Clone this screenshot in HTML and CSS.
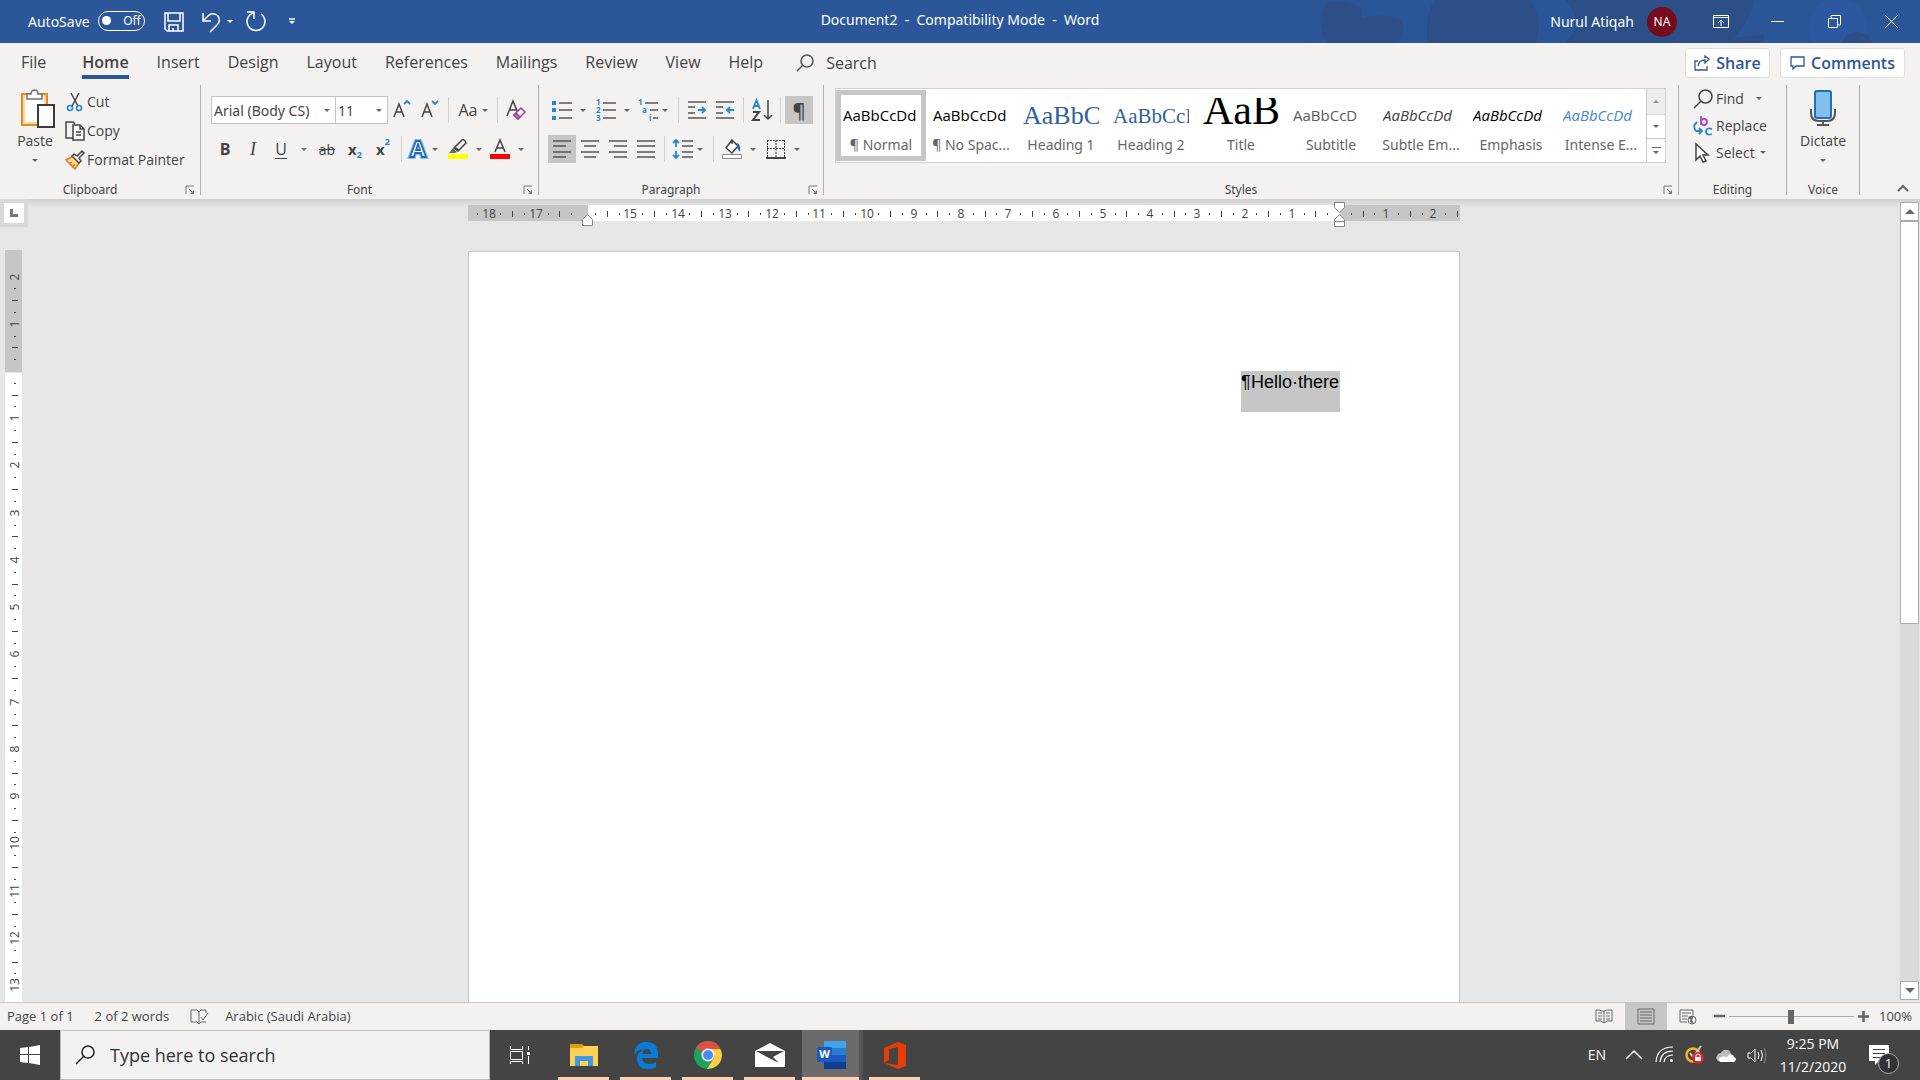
FILE: index.html
```html
<!DOCTYPE html>
<html lang="en">
<head>
<meta charset="utf-8">
<title>Document2 - Compatibility Mode - Word</title>
<link rel="stylesheet" href="styles.css">
</head>
<body>
<header class="titlebar">
  <svg class="titlebar-art" width="640" height="43" viewBox="0 0 640 43" aria-hidden="true">
    <path class="art-mid" d="M30 0H640V43H30Z"/>
    <path class="art-dark" d="M48 43Q34 24 46 4Q62 -2 82 8V18Q100 12 122 20Q126 32 118 43Z"/>
    <path class="art-dark" d="M154 0H250Q264 22 256 43H148Q144 20 154 0Z"/>
    <path class="art-dark" d="M285 0H474Q470 24 448 43H284Q308 24 285 0Z"/>
    <circle class="art-light" cx="558" cy="28" r="30"/>
    <path class="art-dark" d="M432 43Q460 36 484 35Q484 40 478 43ZM562 43Q566 32 577 32Q588 32 592 43Z"/>
  </svg>
  <div class="quick">
    <span class="autosave">AutoSave</span>
    <button class="toggle" role="switch" aria-checked="false"><i></i>Off</button>
    <button class="qbtn save" aria-label="Save"><svg width="20" height="20" viewBox="0 0 20 20"><path d="M1 1H19V19H3L1 17ZM4 1V9H16V1M5 19V13H14V19M9 16V19"/></svg></button>
    <button class="qbtn undo" aria-label="Undo"><svg width="20" height="20" viewBox="0 0 20 20"><path d="M2 1V9H10M2 9L8 3Q13 0 17 4Q20 9 16 13L9 20"/></svg></button>
    <button class="caret white" aria-label="Undo history"></button>
    <button class="qbtn redo" aria-label="Repeat"><svg width="20" height="21" viewBox="0 0 20 21"><path d="M1 1H8V8M15 3A9 9 0 1 1 5 3L8 1"/></svg></button>
    <button class="qbtn more" aria-label="Customize"><svg width="6" height="7" viewBox="0 0 6 7"><path d="M0 1H6"/><path class="solid" d="M0 3H6L3 6Z"/></svg></button>
  </div>
  <h1>Document2&nbsp; -&nbsp; Compatibility Mode&nbsp; -&nbsp; Word</h1>
  <div class="account">
    <span>Nurul Atiqah</span><span class="avatar">NA</span>
    <button class="win" aria-label="Ribbon display options"><svg width="16" height="13" viewBox="0 0 16 13"><path d="M.5 .5H15.500V12.500H.5ZM.5 2.500H15.500M8 11V5M5 8L8 5L11 8"/></svg></button>
    <button class="win" aria-label="Minimize"><svg width="13" height="13" viewBox="0 0 13 13"><path d="M0 6.500H13"/></svg></button>
    <button class="win" aria-label="Restore"><svg width="13" height="13" viewBox="0 0 13 13"><path d="M.5 3.500H9.500V12.500H.5ZM3 3V.5H12.500V10H10"/></svg></button>
    <button class="win" aria-label="Close"><svg width="13" height="13" viewBox="0 0 13 13"><path d="M0 0L13 13M13 0L0 13"/></svg></button>
  </div>
</header>

<nav class="tabs">
  <a class="file" href="#file">File</a>
  <a class="active" href="#home">Home</a>
  <a href="#insert">Insert</a>
  <a href="#design">Design</a>
  <a href="#layout">Layout</a>
  <a href="#references">References</a>
  <a href="#mailings">Mailings</a>
  <a href="#review">Review</a>
  <a href="#view">View</a>
  <a href="#help">Help</a>
  <label class="tell"><svg width="18" height="18" viewBox="0 0 18 18"><circle cx="11" cy="7" r="6"/><path d="M7 11L1 17"/></svg><input type="text" placeholder="Search" aria-label="Search"></label>
  <button class="pill share"><svg width="16" height="16" viewBox="0 0 16 16"><path d="M4 6H1V15H13V11M4 11Q5 5 11 5V8L15 4L11 1V3"/></svg>Share</button>
  <button class="pill"><svg width="15" height="14" viewBox="0 0 15 14"><path d="M1 1H14V10H6L3 13V10H1Z"/></svg>Comments</button>
</nav>

<section class="ribbon">
  <div class="group clipboard">
    <div class="body">
      <button class="big"><svg width="42" height="40" viewBox="-6 0 42 40"><path d="M2 5H27V36H2Z" fill="#fddc8b" stroke="#e8882e" stroke-width="2"/><path d="M5 8H24V33H5Z" fill="#fff"/><path d="M7 10V5H11Q11 1 15 1Q18 1 18 5H22V10Z" fill="#fafafa" stroke="#737373" stroke-width="1.500"/><path d="M18 16H34V38H18Z" fill="#fafafa" stroke="#3b3b3b" stroke-width="2"/></svg><span>Paste</span><i class="tri"></i></button>
      <div class="stack">
        <button><svg width="20" height="20" viewBox="0 0 20 20"><path d="M6 1L13 14M14 1L7 14" stroke="#444" stroke-width="1.500"/><circle cx="5" cy="16" r="2.500" stroke="#2488d0" stroke-width="1.600"/><circle cx="14" cy="16" r="2.500" stroke="#2488d0" stroke-width="1.600"/></svg>Cut</button>
        <button><svg width="20" height="20" viewBox="0 0 20 20" stroke="#444" stroke-width="1.500"><path d="M8 17H1V1H8L10 3"/><path d="M8 4H15L19 8V19H8Z" fill="#fff"/><path d="M15 4V8H19M11 11H16M11 14H16"/></svg>Copy</button>
        <button><svg width="20" height="20" viewBox="0 0 20 20"><path d="M1 10L8 6L14 13L10 19Z" fill="#fddc8b" stroke="#e8761f" stroke-width="1.500"/><path d="M4 14L7 12M7 17L10 14" stroke="#e8761f" stroke-width="1.500"/><path d="M7 6L9 4L12 6L17 1L19 3L14 8L16 11L14 13Z" fill="#fff" stroke="#444" stroke-width="1.500"/></svg>Format Painter</button>
      </div>
    </div>
    <div class="foot">Clipboard<button class="launch" aria-label="Clipboard options"><svg width="10" height="10" viewBox="0 0 10 10"><path d="M1 9V1H9M4 4L8 8"/><path class="fill" d="M9 5V9H5Z"/></svg></button></div>
  </div>

  <div class="group font">
    <div class="body rows">
      <div class="row">
        <label class="combo face"><select aria-label="Font"><option>Arial (Body CS)</option></select><i class="tri"></i></label>
        <label class="combo size"><select aria-label="Font size"><option>11</option></select><i class="tri"></i></label>
        <button class="ic" aria-label="Grow font"><svg width="16" height="20" viewBox="2 0 16 20"><path d="M2 17L7 4L12 17M4 12H10"/><path class="blue" d="M12 4L15 1L18 4"/></svg></button>
        <button class="ic" aria-label="Shrink font"><svg width="16" height="20" viewBox="2 0 16 20"><path d="M2 17L7 4L12 17M4 12H10"/><path class="blue" d="M12 1L15 4L18 1"/></svg></button>
        <i class="sep"></i>
        <button class="case">Aa<i class="tri"></i></button>
        <i class="sep"></i>
        <button class="ic" aria-label="Clear formatting"><svg width="20" height="20" viewBox="0 0 20 20"><path d="M1 16L7 1L12 13M3 10H10"/><path d="M8 15L15 8L19 12L12 19Z" stroke="#9b3ea6" fill="#fff"/><path d="M8 15L10 13L14 17L12 19Z" fill="#c383cb" stroke="#9b3ea6"/></svg></button>
      </div>
      <div class="row">
        <button class="ic b">B</button><button class="ic i">I</button><button class="ic u">U</button><button class="caret" aria-label="Underline style"></button>
        <button class="ic s">ab</button><button class="ic x">x<sub>2</sub></button><button class="ic x">x<sup>2</sup></button>
        <i class="sep"></i>
        <button class="nc" aria-label="Text effects"><svg width="20" height="20" viewBox="0 0 20 20"><path d="M2 18L8 2H12L18 18H14L13 14H7L6 18Z" stroke="#83beec" stroke-width="4"/><path d="M2 18L8 2H12L18 18H14L13 14H7L6 18ZM8 11H12L10 5Z" fill="#fff" stroke="#1e6fbb" stroke-width="1.800"/></svg></button><button class="caret tight" aria-label="Text effects menu"></button>
        <button class="nc pen" aria-label="Highlight"><svg width="20" height="20" viewBox="0 0 20 20"><path d="M6 9L14 1Q17 0 18 4L10 12ZM7 8L11 12"/><path d="M5 9L9 13L7 14H1Z" fill="#666" stroke="none"/><path d="M0 15H20V20H0Z" fill="#ff0" stroke="none"/></svg></button><button class="caret" aria-label="Highlight colors"></button>
        <button class="nc" aria-label="Font color"><svg width="20" height="20" viewBox="0 0 20 20"><path d="M5 13L10 1L15 13M7 9H13"/><path d="M0 15H20V20H0Z" fill="red" stroke="none"/></svg></button><button class="caret" aria-label="Font colors"></button>
      </div>
    </div>
    <div class="foot">Font<button class="launch" aria-label="Font options"><svg width="10" height="10" viewBox="0 0 10 10"><path d="M1 9V1H9M4 4L8 8"/><path class="fill" d="M9 5V9H5Z"/></svg></button></div>
  </div>

  <div class="group para">
    <div class="body rows">
      <div class="row">
        <button class="nc sp" aria-label="Bullets"><svg width="20" height="20" viewBox="0 0 20 20"><path class="ln" d="M7 3H20M7 10H20M7 18H20"/><path class="bf" d="M0 1H4V5H0ZM0 8H4V12H0ZM0 16H4V20H0Z"/></svg></button><button class="caret" aria-label="Bullet library"></button>
        <button class="nc sp" aria-label="Numbering"><svg width="20" height="22" viewBox="0 0 20 22"><path class="ln" d="M7 4H20M7 11H20M7 19H20"/><text x="0" y="6">1</text><text x="0" y="14">2</text><text x="0" y="22">3</text></svg></button><button class="caret" aria-label="Numbering library"></button>
        <button class="nc" aria-label="Multilevel list"><svg width="20" height="22" viewBox="0 0 20 22"><path class="ln" d="M7 4H20M12 11H20M15 19H20"/><text x="0" y="6">1</text><text x="4" y="14">a</text><text x="11" y="22">i</text></svg></button><button class="caret tight" aria-label="List library"></button>
        <i class="sep wide"></i>
        <button class="ic" aria-label="Decrease indent"><svg width="20" height="20" viewBox="0 0 20 20"><path class="ln" d="M1 2H19M1 7H8M1 13H8M1 18H19"/><path class="blue" d="M11 10H18M15 7L18 10L15 13"/></svg></button>
        <button class="ic" aria-label="Increase indent"><svg width="20" height="20" viewBox="0 0 20 20"><path class="ln" d="M1 2H19M1 7H8M1 13H8M1 18H19"/><path class="blue" d="M19 10H12M15 7L12 10L15 13"/></svg></button>
        <i class="sep"></i>
        <button class="ic" aria-label="Sort"><svg width="20" height="22" viewBox="0 0 20 22"><path d="M1 10L4.500 1L8 10M2 7H7" class="blue"/><path d="M1 13H7L1 21H8" stroke-width="2"/><path d="M16 1V20M12 16L16 20L20 16"/></svg></button>
        <i class="sep"></i>
        <button class="ic on pil">¶</button>
      </div>
      <div class="row">
        <button class="ic on" aria-label="Align left"><svg width="20" height="20" viewBox="0 0 20 20"><path class="ln" d="M1 2H19M1 7H14M1 13H19M1 18H14"/></svg></button>
        <button class="ic" aria-label="Center"><svg width="20" height="20" viewBox="0 0 20 20"><path class="ln" d="M1 2H19M4 7H16M1 13H19M4 18H16"/></svg></button>
        <button class="ic" aria-label="Align right"><svg width="20" height="20" viewBox="0 0 20 20"><path class="ln" d="M1 2H19M6 7H19M1 13H19M6 18H19"/></svg></button>
        <button class="ic" aria-label="Justify"><svg width="20" height="20" viewBox="0 0 20 20"><path class="ln" d="M1 2H19M1 7H19M1 13H19M1 18H19"/></svg></button>
        <i class="sep"></i>
        <button class="nc sp" aria-label="Line spacing"><svg width="20" height="20" viewBox="0 0 20 20"><path class="ln" d="M9 2H20M9 7H20M9 13H20M9 18H20"/><path class="blue" d="M3 1V8M0 4L3 1L6 4M3 12V19M0 16L3 19L6 16"/></svg></button><button class="caret tight" aria-label="Line spacing menu"></button>
        <i class="sep wide"></i>
        <button class="nc sp" aria-label="Shading"><svg width="20" height="20" viewBox="0 0 20 20"><path d="M10 1L16 7L10 14L4 9ZM10 1V5" fill="#fff"/><path d="M15 4Q19 5 18 13L15 9Z" fill="#1e6fbb" stroke="none"/><path d="M.5 15.500H19.500V19.500H.5Z" fill="#fff" stroke="#888" stroke-width="1"/></svg></button><button class="caret" aria-label="Shading colors"></button>
        <button class="nc sp" aria-label="Borders"><svg width="20" height="20" viewBox="0 0 20 20"><path d="M1 1.500H19M1.500 1V18M18.500 1V18M10 1V18M1 9.500H19" stroke-dasharray="2 1" stroke-width="1"/><path d="M0 19H20" stroke-width="2"/></svg></button><button class="caret" aria-label="Borders menu"></button>
      </div>
    </div>
    <div class="foot">Paragraph<button class="launch" aria-label="Paragraph options"><svg width="10" height="10" viewBox="0 0 10 10"><path d="M1 9V1H9M4 4L8 8"/><path class="fill" d="M9 5V9H5Z"/></svg></button></div>
  </div>

  <div class="group styles">
    <div class="body">
      <div class="gallery">
        <button class="tile sel"><span class="pv">AaBbCcDd</span><span class="nm">¶ Normal</span></button>
        <button class="tile"><span class="pv">AaBbCcDd</span><span class="nm">¶ No Spac...</span></button>
        <button class="tile"><span class="pv h1">AaBbC</span><span class="nm">Heading 1</span></button>
        <button class="tile"><span class="pv h2">AaBbCcI</span><span class="nm">Heading 2</span></button>
        <button class="tile"><span class="pv ti">AaB</span><span class="nm">Title</span></button>
        <button class="tile"><span class="pv st">AaBbCcD</span><span class="nm">Subtitle</span></button>
        <button class="tile"><span class="pv em dim">AaBbCcDd</span><span class="nm">Subtle Em...</span></button>
        <button class="tile"><span class="pv em">AaBbCcDd</span><span class="nm">Emphasis</span></button>
        <button class="tile"><span class="pv em blu">AaBbCcDd</span><span class="nm">Intense E...</span></button>
        <div class="gscroll">
          <button class="off" aria-label="Previous styles"><i class="tri up"></i></button>
          <button aria-label="Next styles"><i class="tri"></i></button>
          <button class="all" aria-label="More styles"><i class="tri"></i></button>
        </div>
      </div>
    </div>
    <div class="foot">Styles<button class="launch" aria-label="Styles pane"><svg width="10" height="10" viewBox="0 0 10 10"><path d="M1 9V1H9M4 4L8 8"/><path class="fill" d="M9 5V9H5Z"/></svg></button></div>
  </div>

  <div class="group editing">
    <div class="body stack">
      <button><svg width="20" height="20" viewBox="0 0 20 20" stroke="#444" stroke-width="1.500"><circle cx="12.500" cy="7.500" r="6.500"/><path d="M8 12L1 19"/></svg>Find<i class="tri far"></i></button>
      <button><svg width="20" height="20" viewBox="0 0 20 20"><path d="M8 0V9M8 6Q8 3 11 3Q14 3 14 6Q14 9 11 9Q8 9 8 6" stroke="#b146c2" stroke-width="1.800"/><path d="M4 6Q-1 10 3 15H9M6 12L9 15L6 18M19 13Q14 11 13 15Q13 20 19 18" stroke="#2488d0" stroke-width="1.800"/></svg>Replace</button>
      <button><svg width="20" height="20" viewBox="0 0 20 20"><path d="M3 1V17L7 13L10 19L13 18L10 12H15Z" fill="#fff" stroke="#444" stroke-width="1.500"/></svg>Select<i class="tri"></i></button>
    </div>
    <div class="foot">Editing</div>
  </div>

  <div class="group voice">
    <div class="body">
      <button class="big"><svg width="26" height="40" viewBox="0 0 26 40"><path d="M1 20V24Q1 32 9 32H17Q25 32 25 24V20M13 32V36M7 36H19" stroke="#555" stroke-width="2"/><rect x="5" y="2" width="16" height="27" rx="2" fill="#83beec" stroke="#1e6fbb" stroke-width="2"/></svg><span>Dictate</span><i class="tri"></i></button>
    </div>
    <div class="foot">Voice</div>
  </div>
  <button class="collapse" aria-label="Collapse ribbon"><svg width="12" height="8" viewBox="0 0 12 8"><path d="M1 7L6 2L11 7"/></svg></button>
</section>

<main class="workspace">
  <aside class="vside">
    <button class="tabsel" aria-label="Tab type"><svg width="8" height="8" viewBox="0 0 8 8"><path d="M0 0H3V5H8V8H0Z" fill="#777"/></svg></button>
    <svg class="vruler" width="18" height="754" id="vruler" aria-label="Vertical ruler"></svg>
  </aside>
  <div class="canvas">
    <svg class="hruler" width="992" height="26" id="hruler" aria-label="Horizontal ruler"></svg>
    <article class="page"><p>¶<span>Hello·there</span></p></article>
  </div>
  <div class="vscroll">
    <button aria-label="Scroll up"><i class="tri up"></i></button>
    <div class="track"><div class="thumb"></div></div>
    <button aria-label="Scroll down"><i class="tri"></i></button>
  </div>
</main>

<footer class="status">
  <span>Page 1 of 1</span>
  <span>2 of 2 words</span>
  <button class="proof" aria-label="Proofing"><svg width="18" height="16" viewBox="0 0 18 16"><path d="M9 3L7 1H1V13H7L9 15L11 13H16M9 3V15M9 3L11 1H16V4M11 8L13 11L18 4"/></svg></button>
  <span>Arabic (Saudi Arabia)</span>
  <div class="views">
    <button aria-label="Read mode"><svg width="18" height="15" viewBox="0 0 18 15"><path d="M9 2H6L5 1H1V12H6L9 14L12 12H17V1H12L9 2ZM9 2V14M3 4H7M3 7H7M3 10H7M11 4H15M11 7H15M11 10H15"/></svg></button>
    <button class="on" aria-label="Print layout"><svg width="18" height="17" viewBox="0 0 18 17"><path d="M1 1H17V16H1ZM3 4H15M3 7H15M3 10H15M3 13H15"/></svg></button>
    <button aria-label="Web layout"><svg width="18" height="16" viewBox="0 0 18 16"><path d="M8 13H1V1H14V6M3 4H12M3 7H9M3 10H8"/><circle cx="13" cy="11" r="4" fill="#fff"/><path d="M10 9L13 8L12 12L14 14" stroke-width="2"/></svg></button>
  </div>
  <button class="zm" aria-label="Zoom out"><svg width="11" height="11" viewBox="0 0 11 11"><path d="M0 5H11"/></svg></button>
  <input class="zoom" type="range" min="10" max="190" value="100" aria-label="Zoom">
  <button class="zm" aria-label="Zoom in"><svg width="11" height="11" viewBox="0 0 11 11"><path d="M0 5.500H11M5.500 0V11"/></svg></button>
  <span class="pct">100%</span>
</footer>

<div class="taskbar">
  <button class="start" aria-label="Start"><svg width="20" height="20" viewBox="0 0 20 20"><path fill="#fff" d="M0 3L8 2V9H0ZM9 2L20 0V9H9ZM0 10H8V18L0 17ZM9 10H20V20L9 18Z"/></svg></button>
  <label class="search"><svg width="20" height="20" viewBox="0 0 20 20"><circle cx="13" cy="7" r="6"/><path d="M9 11L1 19"/></svg><input type="text" placeholder="Type here to search" aria-label="Type here to search"></label>
  <button class="app plain" aria-label="Task view"><svg width="20" height="20" viewBox="0 0 20 20" fill="none" stroke="#fff"><path d="M.5 1V4.500H12.500V1M.5 6.500H12.500V14.500H.5ZM.5 19V16.500H12.500V19M18.500 1V5M18.500 11V19"/><path d="M17 7H20V10H17Z" fill="#fff" stroke="none"/></svg></button>
  <button class="app" aria-label="File Explorer"><svg width="28" height="24" viewBox="0 0 28 24"><path d="M0 1H12L14 3H27V22H0Z" fill="#e19d0a"/><path d="M0 5H12L14 3H28V23H0Z" fill="#fdd056"/><path d="M5 13H23V23H18V18H10V23H5Z" fill="#3d9ae0"/></svg></button>
  <button class="app" aria-label="Edge"><svg width="26" height="27" viewBox="0 0 26 27"><path d="M1 13Q2 0 13 0Q25 0 25 12V16H9Q10 22 16 22Q20 22 23 20V25Q20 27 15 27Q4 27 4 17Q4 10 11 7Q5 7 1 13ZM9 12H18Q18 7 14 7Q10 7 9 12Z" fill="#0a7cd8" fill-rule="evenodd"/></svg></button>
  <button class="app" aria-label="Chrome"><svg width="28" height="28" viewBox="0 0 28 28"><circle cx="14" cy="14" r="14" fill="#1da261"/><path d="M14 14L2 7Q6 0 14 0Q23 0 26 8H14Z" fill="#dd5144"/><path d="M14 8H26Q28 11 28 14Q27 27 13 28L20 17Z" fill="#ffce44"/><circle cx="14" cy="14" r="6.500" fill="#fff"/><circle cx="14" cy="14" r="5" fill="#4a8af4"/></svg></button>
  <button class="app" aria-label="Mail"><svg width="30" height="24" viewBox="0 0 30 24"><path d="M0 8L15 0L30 8V24H0Z" fill="#fff"/><path d="M1 8H29L18 14L24 20L12 14Z" fill="#444"/></svg></button>
  <button class="app active" aria-label="Word"><svg width="29" height="28" viewBox="0 0 29 28"><path d="M7 0H29V7H7Z" fill="#41a5ee"/><path d="M7 7H29V14H7Z" fill="#2b7cd3"/><path d="M7 14H29V21H7Z" fill="#185abd"/><path d="M7 21H29V28H7Z" fill="#103f91"/><rect y="6" width="15" height="15" rx="1" fill="#185abd"/><text x="7.500" y="17" text-anchor="middle">W</text></svg></button>
  <button class="app" aria-label="Office"><svg width="22" height="27" viewBox="0 0 22 27"><path d="M0 6L14 0L22 3V24L14 27L0 21L14 23V5L5 7V18L0 21Z" fill="#eb3c00"/></svg></button>
  <div class="tray">
    <span class="lang">EN</span>
    <svg width="18" height="12" viewBox="0 0 18 12"><path d="M1 10L9 2L17 10" stroke-width="1.500"/></svg>
    <svg width="20" height="16" viewBox="-4 0 20 16"><path d="M-2 15Q-1 0 15 0M2 15Q3 4 15 4M6 15Q7 8 15 8" stroke-width="1.200"/><circle cx="13.500" cy="13.500" r="1.500" fill="#fff" stroke="none"/></svg>
    <svg width="20" height="20" viewBox="0 0 20 20"><circle cx="8" cy="10" r="6.500" stroke="#fab41e" stroke-width="2.500"/><path d="M5 8L8 12L16 1" stroke="#ccc" stroke-width="2"/><circle cx="13" cy="13" r="6" fill="#d9252a" stroke="none"/><path d="M10 12H16V16H10Z" fill="#fff" stroke="none"/><path d="M11 12V10Q13 8 15 10V12"/></svg>
    <svg width="20" height="13" viewBox="0 0 20 13" stroke="none"><path stroke="none" d="M2 12Q-1 9 1 7Q2 4 5 4Q7 0 11 1Q14 1 15 5L10 13Z" fill="#bbb"/><path stroke="none" d="M4 13Q1 10 5 8Q8 7 11 8Q13 4 17 6Q18 7 18 8Q22 10 18 13Z" fill="#fff"/></svg>
    <svg width="20" height="17" viewBox="0 0 20 17"><path d="M1 6H4L8 2V15L4 11H1ZM11 5Q13 8 11 12M14 3Q17 8 14 14"/><path d="M17 1Q21 8 17 16" stroke="#888"/></svg>
    <div class="clock"><span>9:25 PM</span><span>11/2/2020</span></div>
    <button class="notify" aria-label="Notifications"><svg width="20" height="20" viewBox="0 0 20 20"><path d="M0 0H20V16H10L6 20V16H0Z" fill="#fff" stroke="none"/><path d="M4 4.500H16M4 8.500H16M4 12.500H12" stroke="#444"/></svg><b>1</b></button>
  </div>
</div>
<script src="script.js"></script>
</body>
</html>
```
FILE: styles.css
```css
* { box-sizing: border-box; }
html, body { height: 100%; }
body {
  margin: 0;
  display: flex;
  flex-direction: column;
  overflow: hidden;
  background: #e6e6e6;
  color: #444;
  font-family: "Open Sans", "Noto Sans", sans-serif;
  font-size: 14px;
}
button, input, select {
  margin: 0;
  padding: 0;
  border: 0;
  background: none;
  color: inherit;
  font: inherit;
}
button {
  display: flex;
  align-items: center;
  justify-content: center;
  flex: none;
}
svg { display: block; flex: none; fill: none; overflow: visible; }
a { color: inherit; text-decoration: none; }
i { font-style: normal; }
input { outline: 0; min-width: 0; }
input::placeholder { color: inherit; opacity: 1; }

.tri {
  width: 0;
  height: 0;
  border: 3px solid transparent;
  border-top-color: #666;
  border-bottom-width: 0;
}
.tri.up { border-width: 0 3px 3px; border-bottom-color: #666; }

/* Title bar */
.titlebar {
  position: relative;
  display: grid;
  grid-template-columns: 1fr auto 1fr;
  align-items: center;
  flex: none;
  height: 43px;
  background: #2b579a;
  color: #fff;
  font-family: "Noto Sans", sans-serif;
}
.titlebar-art { position: absolute; right: 0; top: 0; overflow: hidden; }
.art-mid { fill: #2a5596; }
.art-dark { fill: #2b4f86; }
.art-light { fill: #2b589e; }
.titlebar h1 { margin: 0; font-size: 14px; font-weight: 400; line-height: 40px; align-self: start; }
.quick { display: flex; align-items: center; padding-left: 28px; }
.autosave { width: 70px; line-height: 40px; }
.toggle {
  gap: 12px;
  width: 47px;
  height: 20px;
  margin-bottom: 2px;
  border: 1px solid #fff;
  border-radius: 10px;
  font-size: 12px;
}
.toggle i { width: 9px; height: 9px; border-radius: 50%; background: #fff; }
.qbtn svg { stroke: #fff; stroke-width: 1.5; }
.save { margin-left: 19px; }
.undo { margin-left: 17px; }
.redo { margin-left: 7px; }
.more { margin-left: 23px; }
.qbtn .solid { fill: #fff; stroke: none; }
.caret { width: 18px; height: 28px; }
.caret::before {
  content: "";
  border: 3px solid transparent;
  border-top-color: #666;
  border-bottom-width: 0;
}
.caret.tight { width: 10px; }
.caret.white::before { border-top-color: #fff; }
.account { position: relative; display: flex; align-items: center; justify-content: flex-end; }
.avatar {
  display: grid;
  place-items: center;
  width: 30px;
  height: 30px;
  margin: 0 15px 0 13px;
  border-radius: 50%;
  background: #750b1c;
  font-size: 12px;
}
.win { width: 57px; height: 43px; }
.win svg { stroke: #fff; }

/* Tabs */
.tabs {
  display: flex;
  align-items: center;
  gap: 28px;
  flex: none;
  height: 39px;
  padding: 0 15px 0 21px;
  background: #f3f2f1;
  font-size: 16px;
}
.tabs a { line-height: 38px; height: 36px; border-bottom: 4px solid transparent; margin-top: -3px; }
.tabs .file { margin-right: 8px; }
.tabs .active { font-weight: 600; border-color: #2b579a; }
.tell { display: flex; align-items: center; gap: 12px; flex: 1; margin-left: 5px; }
.tell svg { stroke: #555; stroke-width: 1.5; }
.tell input { flex: 1; }
.pill {
  gap: 6px;
  width: 125px;
  height: 30px;
  border: 1px solid #e1dfdd;
  border-radius: 3px;
  background: #fff;
  color: #2b579a;
  font-weight: 600;
}
.pill.share { width: 85px; margin-right: -18px; }
.pill svg { stroke: #2b579a; stroke-width: 1.3; }

/* Ribbon */
.ribbon {
  display: flex;
  flex: none;
  height: 117px;
  padding: 3px 0 4px;
  background: #f3f2f1;
}
.group { display: flex; flex-direction: column; flex: none; border-right: 1px solid #b3b0ad; }
.clipboard { width: 201px; }
.font { width: 338px; }
.para { width: 285px; }
.styles { flex: 1; min-width: 0; }
.editing { width: 108px; }
.voice { width: 73px; }
.body { display: flex; flex: 1; min-height: 0; }
.foot {
  position: relative;
  height: 12px;
  font-family: "Noto Sans", sans-serif;
  font-size: 12px;
  line-height: 14px;
  text-align: center;
  padding-right: 20px;
}
.editing .foot, .voice .foot { padding-right: 0; }
.launch { position: absolute; right: 5px; top: 2px; }
.launch svg { stroke: #777; }
.launch .fill { fill: #777; stroke: none; }
.big { flex-direction: column; justify-content: flex-start; width: 54px; margin: 4px 0 0 8px; line-height: 20px; }
.big span { margin-top: 2px; }
.big .tri { margin-top: 8px; }
.voice .big { width: 72px; margin: 4px 0 0; }
.stack { display: flex; flex-direction: column; }
.stack button { gap: 2px; justify-content: flex-start; height: 29px; }
.clipboard .stack { padding: 2px 0 0 3px; }
.stack.body { padding-left: 14px; }
.stack.body button { height: 27px; gap: 3px; }
.editing .tri { margin-left: 2px; }
.editing .tri.far { margin-left: 9px; }
.rows { flex-direction: column; gap: 11px; padding: 11px 0 0 10px; }
.para .rows { padding-left: 9px; }
.row { display: flex; align-items: center; height: 28px; }
.ic { width: 28px; height: 28px; }
.nc { width: 24px; height: 28px; }
.ic.on { background: #c6c6c6; }
.row svg { stroke: #444; stroke-width: 1.5; }
.row .blue { stroke: #2488d0; stroke-width: 1.8; }
.row .ln { stroke: #555; stroke-width: 1.6; }
.row .bf { fill: #2488d0; stroke: none; }
.row text { fill: #2488d0; stroke: none; font-size: 8px; font-weight: 700; }
.sep { width: 1px; height: 26px; margin: 0 4px; background: #d2d0ce; flex: none; }
.sep.wide { margin-left: 8px; }
.combo {
  position: relative;
  display: flex;
  align-items: center;
  height: 28px;
  border: 1px solid #c3c3c3;
  background: #fff;
  font-family: "Noto Sans", sans-serif;
}
.combo select { appearance: none; width: 100%; padding-left: 2px; outline: 0; }
.combo .tri { position: absolute; right: 5px; }
.face { width: 125px; }
.size { width: 53px; margin-left: -1px; }
.case { width: 40px; gap: 4px; font-size: 16px; }
.b { font-weight: 700; font-size: 16px; }
.i { font-family: "Liberation Serif", serif; font-style: italic; font-size: 18px; }
.u { text-decoration: underline; font-size: 16px; text-underline-offset: 3px; }
.s { text-decoration: line-through; }
.x { font-weight: 700; font-size: 15px; }
.x sub, .x sup { color: #2488d0; font-size: 9px; line-height: 0; }
.x sub { margin-top: 12px; }
.x sup { margin-bottom: 14px; }
.pen { margin-left: 6px; }
.sp { margin-left: 2px; }
.pil { font-size: 20px; font-weight: 600; }

/* Style gallery */
.styles .body { padding: 3px 12px 0 11px; align-items: flex-start; }
.gallery { display: flex; flex: 1; height: 75px; border: 1px solid #d2d0ce; background: #fff; min-width: 0; font-family: "Noto Sans", sans-serif; }
.tile {
  flex: 1;
  flex-direction: column;
  justify-content: flex-start;
  height: 71px;
  min-width: 0;
  margin-top: 1px;
  padding: 3px 0 0;
  border: 5px solid transparent;
  color: #666;
}
.tile.sel { border-color: #c6c6c6; }
.pv {
  width: 76px;
  height: 37px;
  overflow: hidden;
  color: #000;
  font-family: "Open Sans", sans-serif;
  font-size: 15px;
  line-height: 34px;
  text-align: left;
  white-space: nowrap;
}
.tile .h1, .tile .h2, .tile .ti { font-family: "Liberation Serif", serif; line-height: 36px; }
.tile .h1 { color: #2f5f9f; font-size: 26px; }
.tile .h2 { color: #2f5f9f; font-size: 21px; }
.tile .ti { font-size: 42px; line-height: 24px; }
.tile .st { color: #5a5a5a; }
.tile .em { font-style: italic; }
.tile .dim { color: #404040; }
.tile .blu { color: #4a86d0; }
.nm { line-height: 20px; white-space: nowrap; }
.gscroll { width: 19px; display: grid; grid-template-rows: 26px 24px 1fr; border-left: 1px solid #c6c6c6; }
.gscroll button { border-bottom: 1px solid #c6c6c6; }
.gscroll .off { background: #e6e6e6; opacity: .7; }
.gscroll .all { flex-direction: column; gap: 3px; border-bottom: 0; }
.gscroll .all::before { content: ""; width: 9px; height: 1px; background: #666; }
.collapse { width: 60px; align-self: flex-end; justify-content: flex-end; padding-right: 11px; height: 14px; }
.collapse svg { stroke: #666; stroke-width: 2; }

/* Document area */
.workspace {
  display: flex;
  flex: 1;
  min-height: 0;
  background: linear-gradient(#cfcfcf, #e6e6e6 8px);
}
.vside { width: 28px; }
.tabsel { width: 28px; height: 28px; border: 4px solid #d8d8d8; background: #fff; }
.vruler { margin: 23px 0 0 5px; overflow: hidden; }
.canvas { flex: 1; min-width: 0; padding-top: 2px; display: flex; flex-direction: column; align-items: center; }
.hruler { margin-bottom: 24px; }
#hruler text, #vruler text { font-size: 12px; fill: #444; text-anchor: middle; }
.page {
  width: 992px;
  flex: 1;
  padding: 119px 119px 0;
  border: 1px solid #c6c6c6;
  border-bottom: 0;
  background: #fff;
  color: #000;
  font-family: "Liberation Sans", Arial, sans-serif;
  font-size: 18px;
}
.page p { margin: 0 0 0 auto; width: 99px; height: 41px; padding-right: 1px; line-height: 22px; background: #c6c6c6; display: flex; justify-content: space-between; }
.vscroll { display: flex; flex-direction: column; width: 20px; padding: 3px 1px 2px 0; }
.vscroll button { height: 19px; border: 1px solid #ababab; background: #fff; }
.vscroll .tri { border-width: 5px 5px 0; }
.vscroll .tri.up { border-width: 0 5px 5px; }
.track { flex: 1; background: #dadada; }
.thumb { height: 53%; border: 1px solid #ababab; background: #fff; }

/* Status bar */
.status {
  display: flex;
  align-items: center;
  flex: none;
  height: 28px;
  padding: 0 8px 0 7px;
  border-top: 1px solid #c6c6c6;
  background: #f3f2f1;
  font-size: 13px;
}
.status span { margin: 0 21px 2px 0; }
.status svg { stroke: #666; }
.proof { margin-right: 17px; }
.views { display: flex; margin-left: auto; margin-right: 5px; }
.views button { width: 42px; height: 27px; }
.views .on { background: #c6c6c6; }
.zm svg { stroke-width: 2.5; }
.zoom { appearance: none; width: 125px; height: 20px; margin: 0 4px; background: linear-gradient(#aaa, #aaa) center / 100% 1px no-repeat; }
.zoom::-webkit-slider-thumb { appearance: none; width: 6px; height: 14px; background: #666; }
.status .pct { margin: 0 0 2px 10px; }

/* Taskbar */
.taskbar { display: flex; flex: none; height: 50px; background: #444; color: #fff; }
.start { width: 60px; }
.search {
  display: flex;
  align-items: center;
  gap: 15px;
  width: 430px;
  padding-left: 14px;
  border: 1px solid #bbb;
  background: #f2f2f2;
  color: #333;
  font-size: 18px;
}
.search svg { stroke: #222; stroke-width: 1.5; }
.app { width: 51px; margin: 0 3px 0 8px; border-bottom: 3px solid #fdd0b1; border-top: 3px solid transparent; }
.app.plain { width: 60px; margin: 0; border-color: transparent; }
.app.active { width: 57px; margin: 0 2px 0 4px; padding-left: 2px; background: #6b6b6b; box-shadow: 4px 0 #555; }
.app text { font-size: 11px; font-weight: 700; fill: #fff; }
.tray { display: flex; align-items: center; gap: 11px; margin-left: auto; padding-right: 31px; }
.tray svg { stroke: #fff; }
.lang { margin: 0 8px 2px 0; font-size: 14px; }
.clock { display: flex; flex-direction: column; width: 76px; margin-left: -3px; line-height: 23px; text-align: center; font-size: 14px; }
.notify { position: relative; margin-left: 7px; }
.notify b {
  position: absolute;
  left: 9px;
  top: 8px;
  width: 21px;
  height: 21px;
  border: 1px solid #aaa;
  border-radius: 50%;
  background: #333;
  font-size: 13px;
  font-weight: 400;
  line-height: 19px;
}
```
FILE: script.js
```js
const NS = "http://www.w3.org/2000/svg";
const CM = 96 * 1.25 / 2.54;

function add(parent, name, attrs, text) {
  const el = document.createElementNS(NS, name);
  for (const key in attrs) el.setAttribute(key, attrs[key]);
  if (text) el.textContent = text;
  parent.append(el);
  return el;
}

// Quarter-centimetre marks: a number on the whole, a line on the half, dots between.
function marks(svg, zero, from, to, vertical, skip) {
  for (let q = from; q <= to; q++) {
    if (q === 0 || q === skip) continue;
    const p = Math.round(zero + q * CM / 4);
    if (q % 4 === 0) {
      const n = Math.abs(q / 4);
      const at = vertical ? { transform: `translate(14 ${p}) rotate(-90)` } : { x: p, y: 17 };
      add(svg, "text", at, String(n));
    } else {
      const len = q % 2 === 0 ? 6 : 2;
      add(svg, "rect", vertical
        ? { x: 10 - len / 2, y: p, width: len, height: 1, fill: "#444" }
        : { x: p, y: 13 - len / 2, width: 1, height: len, fill: "#444" });
    }
  }
}

const h = document.getElementById("hruler");
add(h, "rect", { x: 0, y: 4, width: 992, height: 16, fill: "#c6c6c6" });
add(h, "rect", { x: 120, y: 4, width: 752, height: 16, fill: "#fff" });
marks(h, 871, -73, 10, false, -64);
const grip = { fill: "#fff", stroke: "#888" };
add(h, "path", { d: "M114.500 24.500V18.500L119.500 13.500L124.500 18.500V24.500Z", ...grip });
add(h, "path", { d: "M866.500 1.500H876.500V6.500L871.500 11.500L866.500 6.500Z", ...grip });
add(h, "path", { d: "M866.500 25.500V18.500L871.500 13.500L876.500 18.500V25.500ZM866.500 20.500H876.500", ...grip });

const v = document.getElementById("vruler");
add(v, "rect", { x: 0, y: 0, width: 17, height: 122, fill: "#c6c6c6" });
add(v, "rect", { x: 0, y: 123, width: 17, height: 640, fill: "#fff" });
marks(v, 121, -8, 52, true);
```
